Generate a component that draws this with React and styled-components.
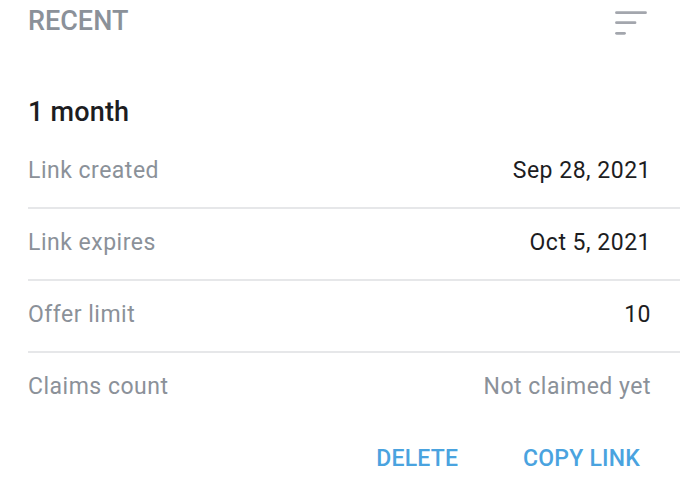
import React from "react";
import styled, { createGlobalStyle } from "styled-components";

const Global = createGlobalStyle`
  html, body { margin: 0; padding: 0; background: #ffffff; }
  body { font-family: Roboto, "Noto Sans", "Liberation Sans", sans-serif; -webkit-font-smoothing: antialiased; }
  * { box-sizing: border-box; }
`;

const Page = styled.div`
  width: 680px;
  height: 489px;
  background: #fff;
  overflow: hidden;
`;

const Header = styled.div`
  display: flex;
  align-items: flex-start;
  justify-content: space-between;
  padding: 1px 33px 0 28px;
  height: 44px;
`;

const HeaderTitle = styled.div`
  font-size: 27px;
  line-height: 40px;
  font-weight: 500;
  color: #8b9199;
`;

const FilterIcon = styled.svg`
  margin-top: 9px;
  display: block;
`;

const Title = styled.div`
  margin: 50px 0 7px 28px;
  font-size: 27px;
  line-height: 36px;
  font-weight: 500;
  color: #1d1d1f;
  letter-spacing: 0.2px;
`;

const List = styled.div`
  display: flex;
  flex-direction: column;
  margin-left: 28px;
`;

const Row = styled.div`
  display: flex;
  justify-content: space-between;
  align-items: center;
  padding: 20px 29px 22px 0;
  font-size: 23px;
  line-height: 28px;
  letter-spacing: 0.5px;
  border-bottom: ${(p) => (p.$last ? "none" : "2px solid #e6e7e9")};
`;

const Label = styled.span`
  color: #8b9199;
`;

const Value = styled.span`
  color: ${(p) => (p.$muted ? "#8b9199" : "#1d1d1f")};
`;

const Actions = styled.div`
  display: flex;
  justify-content: flex-end;
  gap: 41px;
  padding: 0 28px 0 0;
  margin-top: 22px;
`;

const ActionButton = styled.button`
  background: none;
  border: none;
  padding: 0 12px;
  font-family: inherit;
  font-size: 23px;
  line-height: 28px;
  font-weight: 500;
  letter-spacing: 0.2px;
  color: #4aa3df;
  text-transform: uppercase;
  cursor: pointer;
`;

const rows = [
  { label: "Link created", value: "Sep 28, 2021" },
  { label: "Link expires", value: "Oct 5, 2021" },
  { label: "Offer limit", value: "10" },
  { label: "Claims count", value: "Not claimed yet", muted: true },
];

export default function App() {
  return (
    <Page>
      <Global />
      <Header>
        <HeaderTitle>RECENT</HeaderTitle>
        <FilterIcon width="32" height="26" viewBox="0 0 32 26">
          <g stroke="#a3a6ad" strokeWidth="2.8" strokeLinecap="round">
            <line x1="1.5" y1="2.7" x2="30.5" y2="2.7" />
            <line x1="1.5" y1="12.7" x2="20" y2="12.7" />
            <line x1="1.5" y1="23.3" x2="9.5" y2="23.3" />
          </g>
        </FilterIcon>
      </Header>
      <Title>1 month</Title>
      <List>
        {rows.map((r, i) => (
          <Row key={r.label} $last={i === rows.length - 1}>
            <Label>{r.label}</Label>
            <Value $muted={r.muted}>{r.value}</Value>
          </Row>
        ))}
      </List>
      <Actions>
        <ActionButton>Delete</ActionButton>
        <ActionButton>Copy link</ActionButton>
      </Actions>
    </Page>
  );
}
